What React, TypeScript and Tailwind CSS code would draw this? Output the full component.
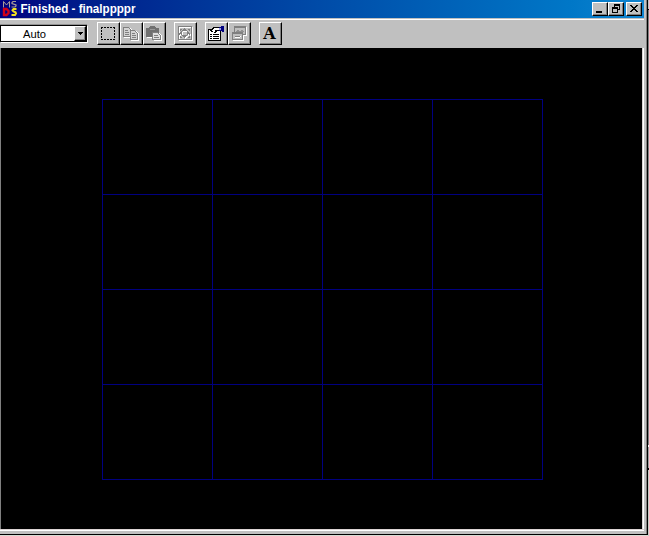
import type { ReactNode } from "react";

const raised =
  "flex shrink-0 items-center justify-center bg-[#c0c0c0] border border-t-white border-l-white border-r-black border-b-black shadow-[inset_-1px_-1px_0_#808080]";

function ToolButton({ label, className = "", children }: { label: string; className?: string; children: ReactNode }) {
  return (
    <button aria-label={label} className={`${raised} h-[23px] w-[23px] pr-[2px] ${className}`}>
      {children}
    </button>
  );
}

function Icon({ children }: { children: ReactNode }) {
  return (
    <svg width="17" height="17" viewBox="0 0 17 17" fill="none" shapeRendering="crispEdges" className="block shrink-0">
      {children}
    </svg>
  );
}

function CaptionButton({ label, className = "", children }: { label: string; className?: string; children: ReactNode }) {
  return (
    <button aria-label={label} className={`${raised} h-[14px] w-[16px] ${className}`}>
      <svg width="12" height="10" viewBox="0 0 12 10" fill="none" shapeRendering="crispEdges">
        {children}
      </svg>
    </button>
  );
}

function DosLogo() {
  return (
    <svg width="16" height="17" viewBox="0 0 16 17" fill="none" className="shrink-0">
      <path d="M1.5 7.5V1.5L4.5 5L7.5 1.5V7.5" stroke="#a89c98" />
      <path d="M14 1.5H11L10 2.5V3.5L14 5V6L13 7H9.5" stroke="#a89c98" strokeWidth="1.2" />
      <path d="M2 9V15H4.5L6.5 13V11L4.5 9Z" stroke="#d00018" strokeWidth="2.4" />
      <path d="M14.5 9H11.5L10.5 10.3L11.5 11.5L13.5 12.3L14 13.5L13 15H9.5" stroke="#f0e020" strokeWidth="2" />
    </svg>
  );
}

const cells = Array.from({ length: 16 }, (_, i) => i);

export default function App() {
  return (
    <div className="flex h-[536px] w-[649px] overflow-hidden bg-[#c0c0c0] font-['Liberation_Sans',Arial,sans-serif]">
      <div className="flex w-[648px] shrink-0 flex-col">
        <div className="flex h-[534px] border-r border-black">
          <div className="flex w-[644px] flex-col">
            <header className="flex h-[18px] shrink-0 items-start bg-linear-to-r from-[#000080] to-[#1084d0] pl-[2px]">
              <DosLogo />
              <svg width="130" height="18" className="ml-[2px] shrink-0">
                <text x="0.5" y="13" textLength="115" lengthAdjust="spacingAndGlyphs" fill="white" fontSize="12" fontWeight="700" fontFamily="'Liberation Sans', Arial, sans-serif">
                  Finished - finalppppr
                </text>
              </svg>
              <div className="ml-auto flex pt-[2px] pr-[2px]">
                <CaptionButton label="Minimize">
                  <path d="M2 7h6v2H2z" fill="#000" />
                </CaptionButton>
                <CaptionButton label="Restore">
                  <path d="M4 0h6v2H4zM4 2h1v1H4zM9 2h1v4H8V5h1zM2 3h6v2H2zM2 5h1v4H2zM7 5h1v4H7zM3 8h4v1H3z" fill="#000" />
                </CaptionButton>
                <CaptionButton label="Close" className="ml-[2px]">
                  <path d="M2 1h2v1h1v1h2V2h1V1h2v1H9v1H8v1H7v1h1v1h1v1h1v1H8V7H7V6H5v1H4v1H2V7h1V6h1V5h1V4H4V3H3V2H2z" fill="#000" />
                </CaptionButton>
              </div>
            </header>

            <div className="mt-px flex h-[29px] shrink-0 items-start border-t border-white pt-[2px]">
              <div className="mt-[3px] flex h-[17px] w-[87px] border border-black bg-white shadow-[1px_1px_0_#fff,0_-1px_0_#909090]">
                <svg width="73" height="15" className="shrink-0">
                  <text x="22" y="12" textLength="23" lengthAdjust="spacingAndGlyphs" fill="#000" fontSize="11" fontFamily="'Liberation Sans', Arial, sans-serif">
                    Auto
                  </text>
                </svg>
                <button aria-label="Choose size" className={`${raised} h-[15px] w-[12px]`}>
                  <svg width="5" height="3" shapeRendering="crispEdges">
                    <path d="M0 0h5v1H4v1H3v1H2V2H1V1H0z" fill="#000" />
                  </svg>
                </button>
              </div>

              <ToolButton label="Mark" className="ml-[10px]">
                <Icon>
                  <path d="M2 2.5h14M2 14.5h14" stroke="#000" strokeDasharray="2 1" />
                  <path d="M2.5 2v13M15.5 2v13" stroke="#000" strokeDasharray="2 1" />
                </Icon>
              </ToolButton>
              <ToolButton label="Copy">
                <Icon>
                  <path d="M2 3h6l3 3h3l3 3v7H9v-3H2z" fill="#fff" />
                  <path d="M1.5 2.5h5l2 2v7h-7zM8.5 5.5h4l3 3v6h-7z" fill="#d4d4d4" stroke="#808080" />
                  <path d="M3 5.5h3M3 7.5h4M3 9.5h4M10 8.5h3M10 10.5h4M10 12.5h4" stroke="#808080" />
                </Icon>
              </ToolButton>
              <ToolButton label="Paste">
                <Icon>
                  <path d="M2 3h12v5l3 3v5H9v-3H2z" fill="#fff" />
                  <path d="M1 3h3V2h1V1h5v1h1v1h3v9H1z" fill="#707070" />
                  <path d="M5 4h5" stroke="#989898" />
                  <path d="M7.5 7.5h5l3 3v4h-8z" fill="#e0e0e0" stroke="#808080" />
                  <path d="M9 10.5h4M9 12.5h5" stroke="#808080" />
                </Icon>
              </ToolButton>
              <ToolButton label="Full screen" className="ml-[8px]">
                <Icon>
                  <path d="M3.5 2.5h13v13h-13z" stroke="#fff" />
                  <path d="M2.5 1.5h13v13h-13z" stroke="#808080" />
                  <path d="M9 4h1v1h1v1h1v1H7V6h1V5h1zM9 14h1v-1h1v-1h1v-1H7v1h1v1h1zM4 9h1V8h1V7h1v4H6v-1H5v1H4zM15 9h-1V8h-1V7h-1v4h1v-1h1v1h1z" fill="#fff" />
                  <path d="M8 3h1v1h1v1h1v1H6V5h1V4h1zM8 13h1v-1h1v-1h1v-1H6v1h1v1h1zM3 8h1V7h1V6h1v4H5V9H4v1H3zM14 8h-1V7h-1V6h-1v4h1V9h1v1h1z" fill="#808080" />
                  <path d="M4 4h2v1H5v1H4zM12 4h2v2h-1V5h-1zM4 11h1v1h1v1H4zM13 11h1v2h-2v-1h1z" fill="#808080" />
                </Icon>
              </ToolButton>
              <ToolButton label="Properties" className="ml-[8px]">
                <Icon>
                  <path d="M1.5 4.5h12v11h-12z" fill="#fff" stroke="#000" />
                  <path d="M3 9h2v1H3zM6 9h6v1H6zM3 11h2v1H3zM6 11h6v1H6zM3 13h2v1H3zM6 13h6v1H6z" fill="#000" />
                  <path d="M4 6h1V4h1V3h6v3h-1v1H9v1H8V6H6v1H4z" fill="#fff" />
                  <path d="M3 5h1V4h1V3h1V2h6v1H7v1H6v1H5v1h1v1H4V6H3zM8 5h4v1h-2v1H9v1H7V7h1z" fill="#000" />
                  <path d="M12 2h2V1h3v6h-2V6h-3z" fill="#000080" />
                  <path d="M12 3h2v2h-2z" fill="#a0a0e0" />
                </Icon>
              </ToolButton>
              <ToolButton label="Background">
                <Icon>
                  <path d="M5 2h12v9h-3v5H3V8h2z" fill="#fff" />
                  <path d="M4.5 1.5h11v8h-11z" fill="#c0c0c0" stroke="#808080" />
                  <path d="M5 2h10v1H5z" fill="#808080" />
                  <path d="M6 6h1V5h2v1h2V5h2v1h1v1H6z" fill="#909090" />
                  <path d="M2.5 7.5h10v7h-10z" fill="#c0c0c0" stroke="#808080" />
                  <path d="M3 8h9v1H3z" fill="#808080" />
                  <path d="M5 11.5h6M5 12.5h5" stroke="#fff" />
                  <path d="M5 11h5v1H5z" fill="#808080" />
                </Icon>
              </ToolButton>
              <ToolButton label="Font" className="ml-[8px]">
                <span className="font-['DejaVu_Serif',serif] text-[16px] leading-[17px] font-bold text-black">A</span>
              </ToolButton>
            </div>

            <div className="flex h-[481px] shrink-0">
              <main className="flex w-[642px] shrink-0 border-l border-[#808080] bg-black pt-[51px] pl-[101px]">
                <div className="grid h-[381px] w-[441px] grid-cols-[repeat(4,110px)] grid-rows-[repeat(4,95px)] border-t border-l border-[#000080]">
                  {cells.map((cell) => (
                    <div key={cell} className="border-r border-b border-[#000080]" />
                  ))}
                </div>
              </main>
              <div className="w-px bg-[#d8d4d4]" />
              <div className="w-px bg-white" />
            </div>
            <div className="h-px shrink-0 bg-[#dcd4d4]" />
            <div className="h-px shrink-0 bg-white" />
          </div>
          <div className="ml-auto w-px bg-[#808080]" />
        </div>
        <div className="h-px bg-black" />
        <div className="h-px bg-[#d8dcd4]" />
      </div>
      <div className="flex w-px flex-col bg-[#808080]">
        <div className="h-[9px] bg-[#c0c0c0]" />
        <div className="h-px bg-black" />
        <div className="h-[435px] bg-[#808080]" />
        <div className="h-[2px] bg-white" />
        <div className="h-[21px] bg-[#a0a0a0]" />
        <div className="h-[2px] bg-black" />
        <div className="grow bg-[#c8ccc4]" />
      </div>
    </div>
  );
}
